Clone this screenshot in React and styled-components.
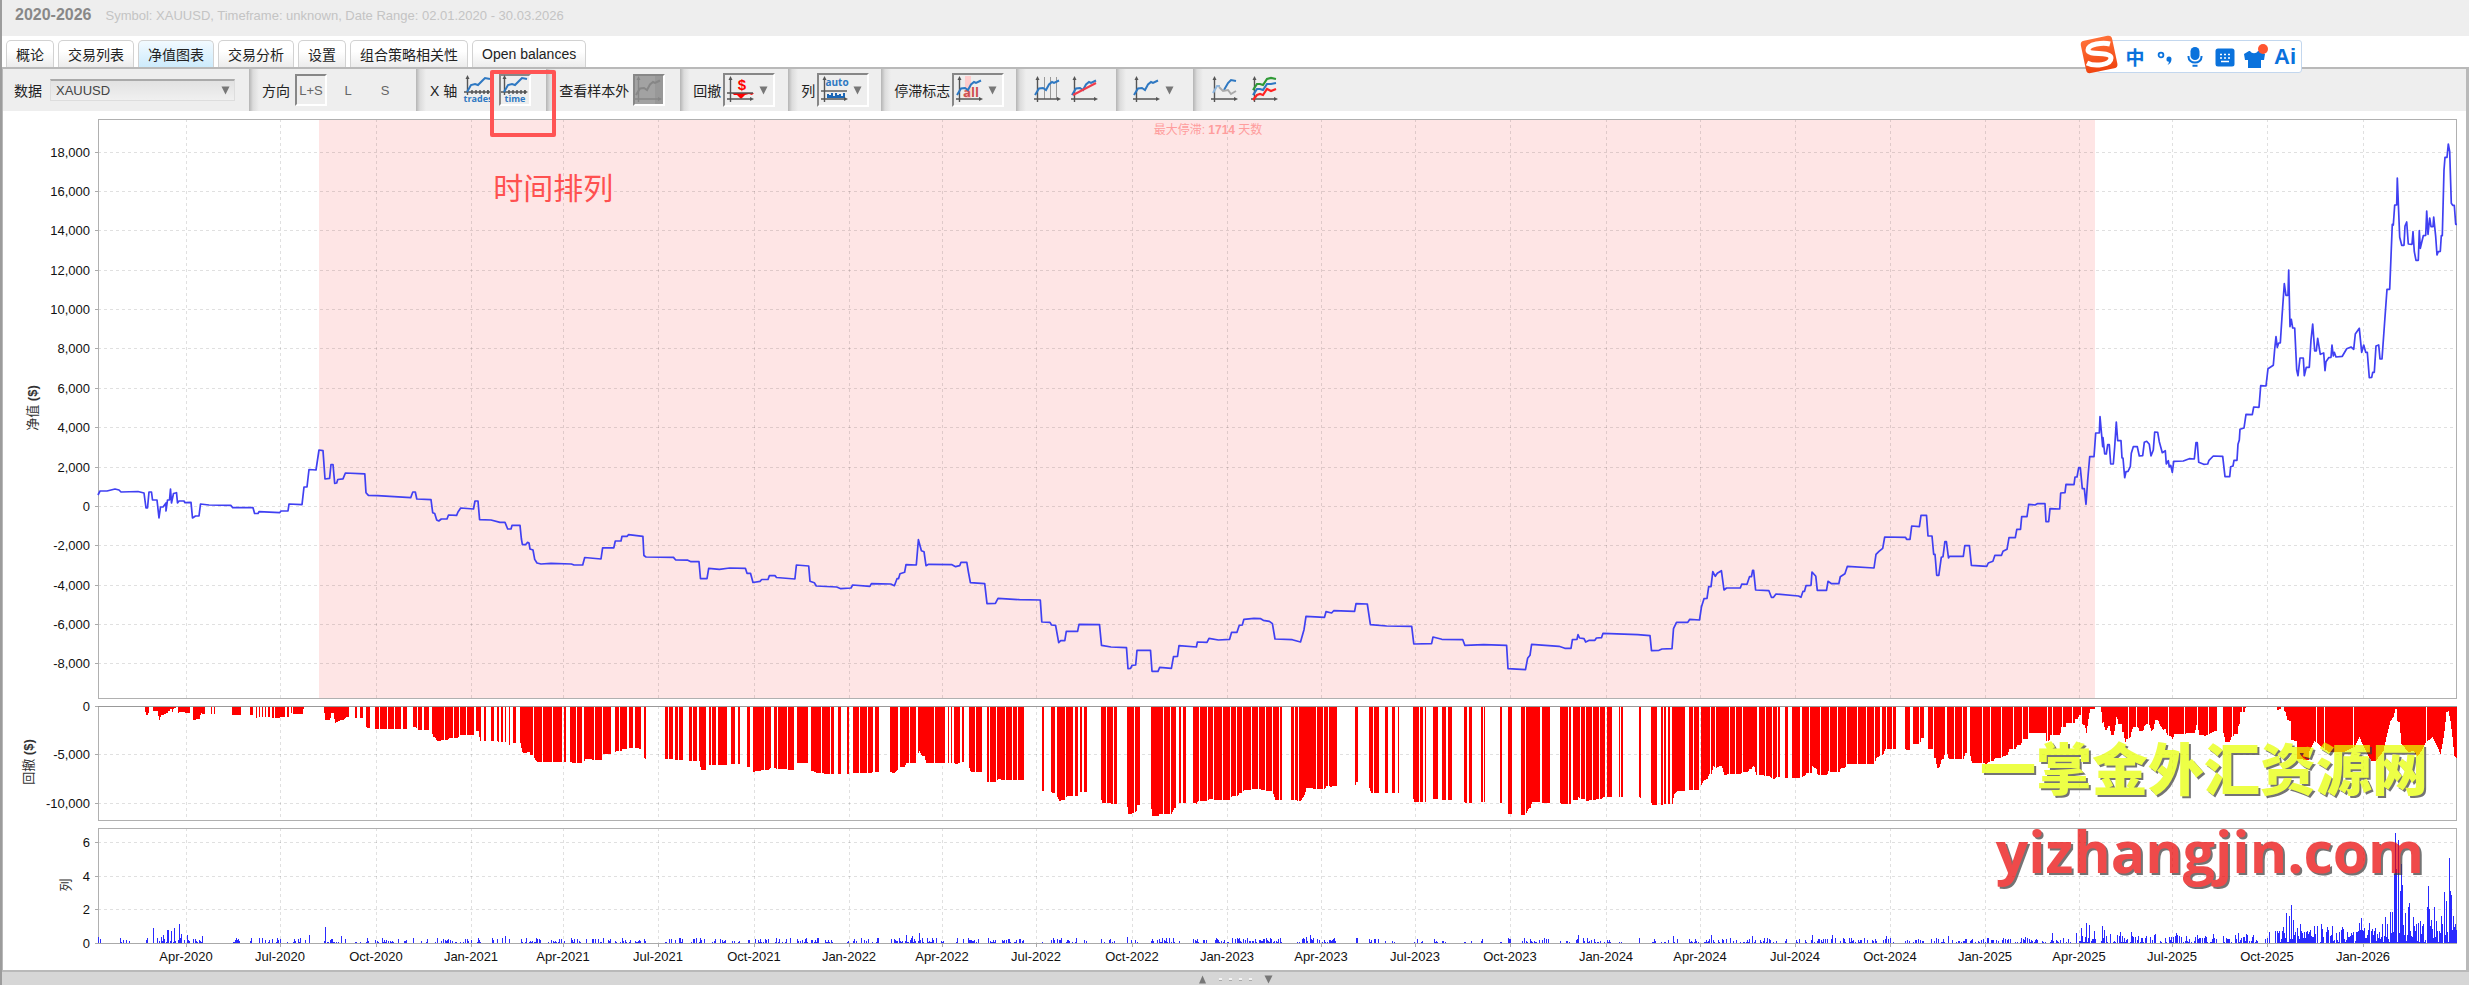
import React from 'react';
import styled, { createGlobalStyle } from 'styled-components';

const GlobalStyle = createGlobalStyle`
  * {
    box-sizing: border-box;
  }

  body {
    margin: 0;
    background: #fff;
    color: #222;
    font-family: "Liberation Sans", "Noto Sans CJK SC", sans-serif;
    font-size: 14px;
  }

  button, select {
    font-family: inherit;
  }
`;

/* ---------- chart data ---------- */

const MONTHS = [
  ['Apr-2020', 187], ['Jul-2020', 281], ['Oct-2020', 377], ['Jan-2021', 472],
  ['Apr-2021', 564], ['Jul-2021', 659], ['Oct-2021', 755], ['Jan-2022', 850],
  ['Apr-2022', 943], ['Jul-2022', 1037], ['Oct-2022', 1133], ['Jan-2023', 1228],
  ['Apr-2023', 1322], ['Jul-2023', 1416], ['Oct-2023', 1511], ['Jan-2024', 1607],
  ['Apr-2024', 1701], ['Jul-2024', 1796], ['Oct-2024', 1891], ['Jan-2025', 1986],
  ['Apr-2025', 2080], ['Jul-2025', 2173], ['Oct-2025', 2268], ['Jan-2026', 2364],
];

const EQUITY = `
98,495 100,491 107,491 115,489 119,490 121,492 138,491.5 144,493 146,508 147.5,508 149,492 151.5,492
152.5,500 157,500 159,518 160.5,507 163,507 166,503 166,511 167.5,500 169.5,500 170.5,489 171.5,503
173.5,493.5 176.5,492.7 177.5,503 179,501 184,501 185,502.7 191,502.3 192.5,518 195.5,516 199,516
200.5,504 209,505 231,505.4 232.7,507.7 253,507.7 254.6,513.5 258,513.5 259,511.6 279.6,512.7
281,511 288,511 289,504 302,504.6 304,487 307,487 309,469.5 316,470 319,450 323,450.6 325,479
329.6,478.4 331,464.5 333,464.5 334.7,483.4 336.7,483 337.8,479.5 343,478.8 345.4,473 364.8,473.8
366,492.7 368.4,495.4 377.5,495.7 410.7,497.7 412.8,492 415.3,492 416.8,499 431,499.6 432.7,512.7
434.7,513.5 436.7,520 438.8,521 441.3,519 447,519 448.5,515 456.6,515.4 458,512 460.7,508 473.5,509
475,501 478,501 479.6,519.7 491,520 500,522.4 505,522.4 507.7,529 511,529 512,525.4 520,525.4
521.4,539 522.4,544.7 525.5,544.7 527.6,542.4 529,543 530,549 533,550 534.7,559.4 537,563 541,564
551,563.3 571.4,564 574,565 582.7,565 584.7,557.5 601,559 602.6,547.8 613.8,547.8 615.3,541 621,541
622,536.3 627,536.3 628.6,534.7 642.9,536.3 643.9,555.5 646,557 673.5,557.4 675.5,559.8 687.8,560.2
691,561.7 699,561.7 700.5,578.7 707,578.7 708.7,568.3 719.4,569.4 729.6,568 745.4,568.3 747,573.3
750.5,573.3 753,582.5 760,581.4 761.7,579.5 768,579.5 769.4,575.6 775,575.6 776.5,577.5 794.9,579
796.4,565 808.7,566 810,581.3 814.3,582.7 816.3,586 836.7,587 840.8,588.7 851,588 852.6,585 869.9,586.3
871.4,583.7 890.8,584 894.4,585.7 897,578.7 898.5,578.7 900,573.7 904.6,572.3 906,564.7 916.3,565
918.4,539.7 921.4,550.7 924,551.7 926,565.7 928.6,564.3 952,564.7 955.6,566.7 959.7,565.7 961,562.3
966.8,562.3 968.4,572 970.4,582.7 984.7,583.7 987,603.7 995.4,603.3 998,598.3 1019.4,599.7 1040.3,600
1041.8,622 1050,622.3 1051.5,625 1055.6,625.3 1058.7,642.7 1060.7,640.7 1064.8,640.7 1066.3,631.3
1077.6,631.3 1079,624.3 1099.5,624.7 1101.5,645.3 1111,647 1126.5,647.7 1128,668.7 1130.6,668.3
1132,665.3 1135.7,665 1137,650.3 1150.5,650.3 1152,671.3 1158,671.3 1159.7,667.3 1171.4,668.3
1173.5,656.7 1177.5,656.3 1179,645.7 1196.4,647 1197.4,642 1207,642.3 1209,638.3 1218.4,640
1229.6,639.3 1231.6,632.3 1237,632.3 1239.3,625.3 1242.3,625 1243.9,619.3 1254,618.3 1260.7,618.7
1263.3,620.3 1269.4,621.3 1272.4,623.7 1275,639 1292.3,639.7 1300.5,642 1304,629.7 1306,616.3
1324.5,617.3 1326,611.7 1331.6,613 1333.7,610.7 1354.6,611.3 1356,603.7 1367.3,604 1370.4,624.7
1386.7,626 1411.7,626.3 1413.8,644 1431.6,643.7 1433,637 1441.8,639.3 1462.8,639.7 1464.8,645.3
1483.7,644.7 1506.6,645.3 1508,668.7 1525.5,669.7 1527.6,658.3 1530,655.3 1531.6,644.3 1559,646.3
1564.8,648.3 1571,648.3 1572.4,639.7 1577,639.3 1578,634.7 1579.6,638 1584,638.7 1585.7,642
1589.3,640.3 1594.9,640.3 1596.4,638 1601.5,637.7 1603,633.3 1637.8,634.7 1650,635.7 1651.5,650.7
1659,650.3 1662,649 1672,648.7 1673.5,628.7 1676.5,622.3 1687.8,622.3 1689.8,619.3 1699.5,620
1701.5,606.7 1704,598.7 1707,598.3 1708.7,586.7 1711,586.7 1712.8,571.7 1715.3,576.3 1717.3,573.3
1721.4,570.7 1724,590 1726.5,588 1740.3,588 1741.8,584 1747,584.3 1749.5,576.7 1751.5,576.7
1752.6,570.3 1753.6,570.3 1755.6,590 1768.9,590.7 1771.4,597.3 1773.5,597.3 1776,594 1798.5,596
1801,597.3 1803,591.3 1804.5,591.3 1806,585.7 1811,585.3 1812,572 1815.8,576.3 1817.3,590.3
1826.5,590.3 1828,581.3 1831.6,583.7 1838.8,583.7 1840.3,576.7 1844.9,573.7 1847.4,566.3 1874,568
1876,554.3 1879,551.3 1882.7,548.3 1884.7,537 1905.6,537.3 1906.6,539.3 1910,539.3 1911.7,526
1919.4,526.7 1921,515.3 1926.5,515.3 1928,536 1932,536 1933.7,554.3 1935,554.3 1936.7,575.3
1938.8,575.3 1941.3,557.3 1943,556.7 1944.9,541.7 1946.4,541.7 1948.5,558 1949.5,556.3 1963.3,556.3
1964.8,545.7 1969.4,545.7 1971.4,565.3 1986.7,566.3 1988.3,563 1992.9,561.3 1994.9,555.3 2001.5,555.3
2003,551.3 2007,549.3 2009,537.7 2015.3,537.7 2016.8,529.3 2020.5,529.3 2021.7,516.7 2027,516.7
2028.7,504.3 2035,505 2037.3,503.7 2045,503.7 2046,521.7 2048.7,521.7 2050,508.7 2059.7,509
2060.7,493 2065,492.7 2066,484.3 2074,484.7 2075,477 2077,477 2078.7,467.7 2080.3,467.7 2082.3,488.7
2084.3,488.7 2086,504.3 2087.7,480 2089.7,456.7 2094,456.7 2095.7,433 2099.3,433 2100,416.7
2102.7,446.7 2103,437.7 2104.7,454 2106.3,454 2107.7,444.7 2109.3,444.7 2110.7,464 2113.3,464
2114.7,446.7 2116.3,422 2117.7,440.7 2121,440.7 2122,458 2123,458 2124.7,477.7 2126,471.7 2128,471.3
2130.3,466.7 2131.3,453.3 2133.3,446.7 2137.3,446.7 2139.3,456 2142.7,455.7 2144.3,442.3 2146.7,441.3
2149.3,444.3 2151,456 2153.3,450 2154.7,432 2157.7,432.3 2159.3,441.7 2162.3,452.7 2165.3,450.7
2166.3,464 2168.3,460.7 2169.3,467 2170.7,465.3 2172.3,472.3 2173.7,461.3 2183.3,461 2189.3,458.7
2194.3,459 2196,442.7 2197.3,442.7 2198.7,462.3 2203.7,464.3 2207.7,464 2209,460.3 2213.3,456
2222.7,456.3 2225,476.7 2229.7,476.7 2230.7,466.7 2233,466 2234,460.3 2237,460.3 2238,444.3
2239.3,440 2240,429.3 2244,428 2246,414.3 2252.3,414.7 2253.7,407 2259,407.3 2260.7,385.7 2266,386
2268,368.7 2273.3,365.3 2274.7,349 2276,336.7 2277.3,347.3 2278.7,343 2280.3,343 2282,316.7
2284.3,283.7 2286,295.3 2288,295.3 2288.7,270 2290,326.7 2291.3,319.3 2292.7,328 2294.7,328
2296.7,370 2298,375.7 2300,358 2303.3,358 2304.3,375.7 2306.3,367.3 2309.3,367.3 2311,340 2312.7,324
2314.7,351 2316.3,351 2317.7,338.3 2320.3,354.3 2323.7,353 2325,370.7 2326,361.7 2328.7,357.7
2331,357.3 2332,345 2333.3,356 2334.3,352.3 2336,357 2342.3,356.3 2346.7,348.7 2351,347 2353.7,349.3
2355.3,334 2359.3,328.3 2361.7,352.3 2363.7,345 2365.7,352.3 2367.3,352.3 2369.3,377.7 2371.7,377.3
2372.7,372.3 2374.3,372.3 2376,346 2378.7,345 2380,359 2382,359 2384.3,326.7 2387,289.3 2389.7,289.3
2391,256.7 2392.3,224.3 2393.3,225 2394.7,205 2396.7,205 2397.3,178 2399.7,237.3 2401.7,245.3
2404,245.3 2405,226 2406.7,222 2408.3,244 2412,244.3 2413,231.7 2414.3,251.7 2416,260.3 2418.3,260.3
2419.3,230.7 2420.3,248.3 2423.3,235.7 2425.7,235.3 2426.7,211 2428,234.3 2429.7,218 2431,226.7
2433,226.7 2433.7,217 2435.7,236.7 2437,255 2438.3,251.7 2440.3,251.3 2441.3,235.7 2442.3,235.7
2444,170 2445,157.3 2447,157.3 2448.3,144 2449.7,151.7 2451.3,203.3 2452.7,205.3 2454.3,205.3
2455.7,224.3 2457,224.3`;

// days with open drawdown, as start-end ranges on the x axis
const DRAWDOWN_RANGES = `
120-131 145-149 153-176 178-190 193-205 211-212 214-215 232-241 250-253 256-257 259-260 262-263 265-266
268-270 272-274 275-285 287-289 291-292 293-306 324-349 355-357 360-363 366-370 375-379 380-387 388-394
395-401 403-407 413-417 418-422 424-429 432-444 445-453 454-459 460-466 467-474 476-481 484-486
491-494 497-499 501-503 505-506 509-510 513-516 520-533 534-542 543-552 553-562 564-566 570-576
577-582 584-594 595-602 603-611 615-619 620-627 629-633 635-641 644-646 665-668 669-673 675-678
679-683 689-692 693-697 699-706 709-711 712-716 718-727 731-735 738-740 747-750 753-764 765-771
774-777 778-787 788-794 797-808 811-821 822-830 831-834 838-841 847-849 853-859 860-867 868-873
875-879 890-898 900-909 910-916 918-934 935-945 948-949 951-952 954-960 962-964 969-975 976-982
987-989 990-996 997-1005 1006-1012 1013-1017 1018-1024 1042-1044 1051-1055 1057-1065 1066-1073
1075-1078 1080-1082 1084-1087 1101-1106 1107-1113 1114-1117 1127-1134 1135-1140 1151-1163 1164-1170
1171-1176 1179-1181 1183-1186 1193-1199 1200-1207 1208-1213 1214-1222 1223-1230 1231-1236 1237-1242
1243-1251 1252-1258 1259-1265 1266-1272 1273-1279 1280-1282 1291-1294 1295-1298 1299-1316 1317-1323
1324-1328 1329-1337 1355-1358 1369-1373 1374-1379 1385-1388 1392-1395 1398-1399 1413-1419 1420-1423
1425-1426 1433-1438 1442-1446 1448-1452 1464-1467 1469-1472 1481-1483 1484-1485 1500-1502 1508-1512
1521-1525 1526-1540 1542-1550 1560-1568 1569-1571 1573-1580 1581-1585 1586-1592 1593-1599 1600-1605
1607-1612 1619-1620 1621-1623 1639-1641 1651-1657 1661-1663 1664-1666 1668-1670 1672-1685 1689-1693
1694-1699 1701-1710 1711-1715 1716-1729 1730-1735 1736-1742 1743-1757 1759-1765 1766-1772 1773-1777
1778-1780 1785-1788 1792-1800 1802-1809 1810-1820 1821-1829 1830-1837 1838-1846 1847-1857 1858-1866
1867-1874 1875-1880 1882-1886 1887-1892 1893-1896 1905-1910 1913-1919 1920-1924 1928-1933 1934-1945
1947-1954 1955-1962 1963-1967 1970-1982 1983-1990 1991-2001 2002-2013 2014-2022 2023-2028 2029-2047
2048-2052 2053-2062 2063-2072 2073-2081 2082-2096 2101-2128 2129-2136 2137-2148 2149-2168 2169-2184
2185-2197 2198-2208 2209-2217 2223-2232 2233-2242 2243-2259 2265-2268 2277-2316 2317-2324 2325-2353
2354-2426 2427-2457`;

const DRAWDOWN_TAIL = `
2283,3 2285,6 2287,14 2290,15 2291,34 2296,35 2297,53 2308,54 2309,45 2314,35 2319,39 2328,46 2343,46
2354,41 2359,31 2363,40 2368,50 2371,55 2375,55 2383,45 2386,31 2390,15 2393,11 2395,3 2396,3 2397,15
2399,16 2401,38 2408,46 2413,45 2417,50 2421,45 2426,35 2430,33 2432,31 2437,41 2440,48 2442,38
2444,25 2446,6 2448,5 2450,15 2452,31 2454,50 2457,53`;

const VOLUME_PEAKS = `
98,6 100,4 123,3 153,15 161,6 163,8 167,13 168,13 171,12 174,15 179,19 181,9 187,8 202,7 236,5 309,8
325,16 341,7 367,5 413,5 478,5 505,7 536,5 603,5 700,5 817,5 899,5 906,8 912,7 919,10 968,5 1127,6
1306,6 1310,8 1356,5 1578,8 1673,7 1711,8 1752,7 1812,8 1832,8 1886,7 1948,7 2025,6 2052,10 2076,10
2081,15 2086,20 2089,18 2094,12 2102,17 2104,13 2110,9 2120,11 2131,11 2155,9 2176,10 2197,8 2213,9
2238,10 2246,9 2269,11 2275,12 2277,12 2279,12 2283,16 2286,30 2289,27 2291,38 2293,23 2297,15 2300,19
2306,11 2314,17 2317,17 2321,19 2327,16 2332,17 2342,16 2347,11 2353,11 2359,20 2361,25 2364,15 2369,20
2375,15 2385,26 2387,19 2390,31 2392,31 2394,69 2395,110 2396,74 2398,103 2400,52 2401,79 2402,58
2405,30 2408,36 2409,40 2413,26 2416,17 2420,22 2427,36 2428,57 2429,34 2431,23 2434,36 2436,22 2441,27
2444,51 2446,42 2449,85 2450,52 2451,48 2453,27`;

const toPoints = (text) => text.trim().split(/\s+/).map((pair) => pair.split(',').map(Number));

const valueAt = (points, x) => {
  const i = points.findIndex((p) => p[0] >= x);
  if (i < 0) return points[points.length - 1][1];
  if (i === 0) return points[0][1];
  const [x0, y0] = points[i - 1];
  const [x1, y1] = points[i];
  return x1 === x0 ? y1 : y0 + ((y1 - y0) * (x - x0)) / (x1 - x0);
};

const equityPoints = toPoints(EQUITY);
const tailPoints = toPoints(DRAWDOWN_TAIL);
const ranges = DRAWDOWN_RANGES.trim().split(/\s+/).map((r) => r.split('-').map(Number));

const drawdownAt = (x) => {
  if (x > 2283) return valueAt(tailPoints, x);
  const past = equityPoints.filter((p) => p[0] <= x).map((p) => p[1]);
  const height = (valueAt(equityPoints, x) - Math.min(...past)) * 0.495;
  return x > 2101 && x < 2240 ? height + 6 : height;
};

const buildDrawdown = () => {
  let path = '';
  ranges.forEach(([from, to]) => {
    for (let x = from; x < to; x += 1) {
      path += `M${x + 0.5} 706v${Math.max(1, Math.round(drawdownAt(x)))}`;
    }
  });
  return path;
};

const buildVolume = () => {
  let path = '';
  let seed = 7;
  const random = () => {
    seed = (seed * 16807) % 2147483647;
    return seed / 2147483647;
  };
  const size = (x) => {
    if (x > 2380) return 20;
    if (x > 2268) return 14;
    if (x > 2072) return 8;
    return 5;
  };
  ranges.forEach(([from, to]) => {
    for (let x = from; x < to; x += 1) {
      if (random() < (x > 2268 ? 0.9 : 0.6)) {
        path += `M${x + 0.5} 943v-${Math.max(1, Math.round(random() * size(x)))}`;
      }
    }
  });
  toPoints(VOLUME_PEAKS).forEach(([x, height]) => {
    path += `M${x + 0.5} 943v-${height}`;
  });
  return path;
};

const drawdownPath = buildDrawdown();
const volumePath = buildVolume();

const PANELS = [
  {
    top: 119,
    bottom: 698,
    ticks: [
      ['18,000', 152], ['16,000', 191], ['14,000', 230], ['12,000', 270], ['10,000', 309],
      ['8,000', 348], ['6,000', 388], ['4,000', 427], ['2,000', 467], ['0', 506],
      ['-2,000', 545], ['-4,000', 585], ['-6,000', 624], ['-8,000', 663],
    ],
  },
  { top: 706, bottom: 820, ticks: [['0', 706], ['-5,000', 754], ['-10,000', 803]] },
  { top: 828, bottom: 943, ticks: [['6', 842], ['4', 876], ['2', 909], ['0', 943]] },
];

/* ---------- layout ---------- */

const Page = styled.div`
  display: flex;
  flex-direction: column;
  position: relative;
  border-left: 2px solid #9c9c9c;
`;

const Header = styled.header`
  display: flex;
  align-items: center;
  gap: 14px;
  height: 36px;
  padding: 0 13px 6px;
  background: #eee;
`;

const Title = styled.h1`
  margin: 0;
  font-size: 16px;
  color: #888;
`;

const Subtitle = styled.span`
  font-size: 13px;
  color: #c4c4c4;
`;

const TabBar = styled.nav`
  display: flex;
  align-items: flex-end;
  gap: 4px;
  height: 31px;
  padding-left: 4px;
`;

const Tab = styled.button`
  height: 27px;
  padding: 0 9px;
  border: 1px solid #d2d2d2;
  border-bottom: 0;
  border-radius: 5px 5px 0 0;
  background: ${(p) => (p.$active
    ? 'linear-gradient(#f2faff, #cdebfc)'
    : 'linear-gradient(#fff 40%, #ececec)')};
  color: #222;
  font-size: 14px;
  white-space: nowrap;
`;

const Panel = styled.main`
  border: solid #b9b9b9;
  border-width: 2px 3px 2px 1px;
`;

const Toolbar = styled.div`
  display: flex;
  height: 42px;
  background: #eee;
`;

const Group = styled.div`
  display: flex;
  align-items: center;
  gap: ${(p) => p.$gap || 5}px;
  padding: 0 ${(p) => p.$end || 15}px 0 ${(p) => p.$start || 13}px;
  background: ${(p) => (p.$first ? 'none' : 'linear-gradient(90deg, #b4b4b4, #dcdcdc 4px, #eee 10px)')};
`;

const Label = styled.label`
  color: #222;
  font-size: 14px;
  white-space: nowrap;
`;

const SelectBox = styled.div`
  display: flex;
  align-items: center;
  position: relative;
  margin-left: 3px;

  svg {
    position: absolute;
    right: 5px;
    pointer-events: none;
  }
`;

const Select = styled.select`
  width: 185px;
  height: 22px;
  padding: 0 5px;
  border: 1px solid #ddd;
  border-top: 2px solid #aaa;
  appearance: none;
  background: linear-gradient(#e2e2e2, #f0f0f0);
  color: #444;
  font-size: 13px;
`;

const ToolButton = styled.button`
  display: flex;
  align-items: center;
  justify-content: ${(p) => (p.$wide ? 'space-between' : 'center')};
  width: ${(p) => (p.$wide ? 52 : 32)}px;
  height: ${(p) => (p.$wide ? 34 : 32)}px;
  padding: ${(p) => (p.$wide ? '0 5px 0 2px' : '0')};
  border: 2px solid;
  border-color: ${(p) => (p.$pressed ? '#878787 #fff #fff #878787' : 'transparent')};
  background: ${(p) => (p.$dark ? '#a2a2a2' : 'transparent')};
  color: #666;
  font-size: 13px;
`;

const Marked = styled.div`
  position: relative;
`;

const MarkFrame = styled.div`
  position: absolute;
  top: -4px;
  left: -9px;
  width: 66px;
  height: 67px;
  border: 4px solid #ff5454;
  border-radius: 2px;
  pointer-events: none;
`;

const MarkText = styled.p`
  position: absolute;
  top: 95px;
  left: -6px;
  margin: 0;
  color: #ff5050;
  font-size: 30px;
  line-height: 40px;
  white-space: nowrap;
`;

const Chart = styled.svg`
  display: block;
  width: 100%;
  height: auto;
  font-size: 13px;
`;

const Splitter = styled.footer`
  display: flex;
  align-items: center;
  justify-content: center;
  gap: 12px;
  height: 14px;
  background: #d6d6d6;
`;

const Dots = styled.div`
  display: flex;
  gap: 7px;

  i {
    width: 3px;
    height: 3px;
    background: #f4f4f4;
    border-bottom: 1px solid #aaa;
  }
`;

const InputBar = styled.div`
  display: flex;
  align-items: center;
  position: absolute;
  top: 40px;
  right: 167px;
  height: 33px;
  padding: 0 1px 0 22px;
  border: 1px solid #c3d7ee;
  border-radius: 3px;
  background: #fff;
`;

const InputLogo = styled.svg`
  position: absolute;
  top: -7px;
  left: -19px;
`;

const InputButton = styled.button`
  display: flex;
  align-items: center;
  justify-content: center;
  width: 30px;
  height: 30px;
  padding: 0;
  border: 0;
  background: none;
  color: #0a72dc;
  font-size: ${(p) => p.$size || 19}px;
  font-weight: 700;
`;

const Watermark = styled.div`
  display: flex;
  flex-direction: column;
  align-items: flex-end;
  position: absolute;
  right: 41px;
  bottom: 96px;
  opacity: 0.72;
  white-space: nowrap;
  pointer-events: none;
`;

const WatermarkName = styled.span`
  color: #e7ff00;
  font-size: 56px;
  font-weight: 900;
  line-height: 82px;
  text-shadow: 2px 2px #3f3f3f;
`;

const WatermarkSite = styled.span`
  padding-right: 4px;
  color: #ea0505;
  font-family: "Open Sans", sans-serif;
  font-size: 57px;
  font-weight: 700;
  line-height: 78px;
  text-shadow: 2px 2px #3f3f3f;
`;

/* ---------- icons ---------- */

const Arrow = ({ up }) => (
  <svg width="9" height="9" viewBox="0 0 9 9" aria-hidden="true">
    <path d={up ? 'M4.5 0.5 8 8.5H1Z' : 'M0.5 0.5h8L4.5 8.5Z'} fill="#777" />
  </svg>
);

const LINE = 'M1 19 5 12.5 9 12 12 14 15 8.5 18 6 20 7 25 4.5';

const Axes = ({ base = 23, color = '#555' }) => (
  <g stroke={color} fill={color}>
    <path d={`M3.5 3V${base + 3}M0 ${base}H24`} strokeWidth="1.4" fill="none" />
    <path d={`M3.5 0 5.5 4h-4ZM27 ${base}l-4-2v4Z`} stroke="none" />
  </g>
);

const IconBase = ({ children }) => (
  <svg width="28" height="28" viewBox="0 0 28 28" aria-hidden="true" fill="none">
    {children}
  </svg>
);

const ScaleDrawing = styled.svg`
  flex: none;
  width: 34px;
  height: 32px;
`;

const ScaleIcon = ({ text }) => (
  <ScaleDrawing viewBox="-3 -1 34 32" aria-hidden="true" fill="none">
    <Axes base={17} />
    <path d="M8 15v4M12 15v4M16 15v4M20 15v4M24 15v4" stroke="#555" strokeWidth="1.5" />
    <path d="M3 17 7 10 11 9 14 10 18 6 21 3 26 4" stroke="#2e78c2" strokeWidth="2" />
    <text x="14" y="27" textAnchor="middle" fill="#2e78c2" fontSize="9" fontWeight="700" fontFamily="Open Sans, sans-serif">
      {text}
    </text>
  </ScaleDrawing>
);

const SampleIcon = () => (
  <IconBase>
    <path d="M20 0h8v28h-8Z" fill="#989898" />
    <Axes color="#868686" />
    <path d={LINE} stroke="#868686" strokeWidth="2" />
  </IconBase>
);

const DrawdownIcon = () => (
  <IconBase>
    <path d="M5 17h22l-2 2-3-1-4 1-4 4-4-4-3 0-2-2Z" fill="#f00" />
    <Axes />
    <path d="M0 17h26" stroke="#555" strokeWidth="1.5" />
    <text x="15" y="14" textAnchor="middle" fill="#f00" fontSize="15" fontWeight="700">$</text>
  </IconBase>
);

const BarsIcon = () => (
  <IconBase>
    <path d="M6 22v-4h2v1h2v-2h2v3h2v-3h2v2h2v-1h2v2h2v-3h2v5Z" fill="#1c66b4" />
    <Axes />
    <path d="M0 15h26" stroke="#555" strokeWidth="1.4" />
    <text x="16" y="10" textAnchor="middle" fill="#2e78c2" fontSize="10" fontWeight="700" fontFamily="Open Sans, sans-serif">
      auto
    </text>
  </IconBase>
);

const StagnationIcon = () => (
  <IconBase>
    <path d="M9 0h6v22H9Z" fill="#fcc" />
    <Axes />
    <text x="15" y="21" textAnchor="middle" fill="#cf5050" fontSize="13" fontWeight="700" fontFamily="Open Sans, sans-serif">
      all
    </text>
    <path d={LINE} stroke="#2e78c2" strokeWidth="2" />
  </IconBase>
);

const GridIcon = () => (
  <IconBase>
    <path d="M10.5 1v22M16.5 1v22M22.5 1v22" stroke="#999" />
    <Axes />
    <path d={LINE} stroke="#2e78c2" strokeWidth="2" />
  </IconBase>
);

const TrendIcon = () => (
  <IconBase>
    <Axes />
    <path d={LINE} stroke="#2e78c2" strokeWidth="2" />
    <path d="M2 19 25 7" stroke="#f03c4b" strokeWidth="2" />
  </IconBase>
);

const LineIcon = () => (
  <IconBase>
    <Axes />
    <path d={LINE} stroke="#2e78c2" strokeWidth="2" />
  </IconBase>
);

const CompareIcon = () => (
  <IconBase>
    <Axes />
    <path d="M2 17 6 10 9 10" stroke="#8fb6dd" strokeWidth="2" />
    <path d="M13 14 17 7 20 4 25 5" stroke="#2e78c2" strokeWidth="2" />
    <path d="M8 11 12 15 17 14 20 18 25 15" stroke="#aaa" strokeWidth="2" />
  </IconBase>
);

const StackIcon = () => (
  <IconBase>
    <Axes />
    <path d="M2 14 6 8 9 8 12 9 16 3 20 2 25 3" stroke="#2f9a36" strokeWidth="2.2" />
    <path d="M2 19 6 13 9 13 12 14 16 8 20 8 25 7" stroke="#2e78c2" strokeWidth="2.2" />
    <path d="M2 24 6 19 9 18 12 19 16 13 20 15 25 13" stroke="#f22" strokeWidth="2.2" />
  </IconBase>
);

/* ---------- sections ---------- */

const tabs = ['概论', '交易列表', '净值图表', '交易分析', '设置', '组合策略相关性', 'Open balances'];

const ToolbarRow = () => (
  <Toolbar>
    <Group $first $start={11} $end={14}>
      <Label htmlFor="data">数据</Label>
      <SelectBox>
        <Select id="data" defaultValue="XAUUSD">
          <option>XAUUSD</option>
        </Select>
        <Arrow />
      </SelectBox>
    </Group>
    <Group>
      <Label as="span">方向</Label>
      <ToolButton $pressed>L+S</ToolButton>
      <ToolButton>L</ToolButton>
      <ToolButton>S</ToolButton>
    </Group>
    <Group $start={14}>
      <Label as="span">X 轴</Label>
      <ToolButton aria-label="trades"><ScaleIcon text="trades" /></ToolButton>
      <Marked>
        <ToolButton $pressed aria-label="time"><ScaleIcon text="time" /></ToolButton>
        <MarkFrame />
        <MarkText>时间排列</MarkText>
      </Marked>
    </Group>
    <Group $gap={4}>
      <Label htmlFor="sample">查看样本外</Label>
      <ToolButton id="sample" $pressed $dark><SampleIcon /></ToolButton>
    </Group>
    <Group $gap={2} $end={13}>
      <Label htmlFor="drawdown">回撤</Label>
      <ToolButton id="drawdown" $wide $pressed><DrawdownIcon /><Arrow /></ToolButton>
    </Group>
    <Group $gap={2} $end={12}>
      <Label htmlFor="bars">列</Label>
      <ToolButton id="bars" $wide $pressed><BarsIcon /><Arrow /></ToolButton>
    </Group>
    <Group $gap={2} $end={12}>
      <Label htmlFor="stagnation">停滞标志</Label>
      <ToolButton id="stagnation" $wide $pressed><StagnationIcon /><Arrow /></ToolButton>
    </Group>
    <Group $start={16}>
      <ToolButton aria-label="grid"><GridIcon /></ToolButton>
      <ToolButton aria-label="trend"><TrendIcon /></ToolButton>
    </Group>
    <Group $end={12}>
      <ToolButton $wide aria-label="line"><LineIcon /><Arrow /></ToolButton>
    </Group>
    <Group $start={16} $gap={8}>
      <ToolButton aria-label="compare"><CompareIcon /></ToolButton>
      <ToolButton aria-label="stack"><StackIcon /></ToolButton>
    </Group>
  </Toolbar>
);

const EquityChart = () => (
  <Chart viewBox="3 111 2463 859">
    <rect x="319" y="119" width="1776" height="579" fill="#fee5e5" />
    {PANELS.map((panel) => (
      <g key={panel.top}>
        {panel.ticks.map(([label, y]) => (
          <g key={label}>
            <path d={`M98 ${y + 0.5}H2457`} stroke="#000" strokeOpacity="0.12" strokeDasharray="3 3" />
            <path d={`M95 ${y + 0.5}h3`} stroke="#aaa" />
            <text x="90" y={y + 5} textAnchor="end" fill="#111">{label}</text>
          </g>
        ))}
        {MONTHS.map(([month, x]) => (
          <path
            key={month}
            d={`M${x - 0.5} ${panel.top}V${panel.bottom}`}
            stroke="#000"
            strokeOpacity="0.12"
            strokeDasharray="3 3"
          />
        ))}
        <rect
          x="98.5"
          y={panel.top + 0.5}
          width="2358"
          height={panel.bottom - panel.top}
          fill="none"
          stroke="#b0b0b0"
        />
      </g>
    ))}
    <path d={drawdownPath} stroke="#f00" />
    <path d="M98 706.5H2457" stroke="#999" />
    <path d={volumePath} stroke="#2a2aff" />
    <path d="M98 943.5H2457" stroke="#aaa" />
    <polyline points={EQUITY} fill="none" stroke="#4040f2" strokeWidth="1.7" strokeLinejoin="round" />
    {MONTHS.map(([month, x]) => (
      <g key={month}>
        <path d={`M${x - 0.5} 944v3`} stroke="#aaa" />
        <text x={x - 1} y="961" textAnchor="middle" fill="#111">{month}</text>
      </g>
    ))}
    <text x="1208" y="134" textAnchor="middle" fill="#ff9d9d" fontSize="12">
      最大停滞: <tspan fontWeight="700">1714</tspan> 天数
    </text>
    <g fill="#333" textAnchor="middle">
      <text transform="translate(37 408) rotate(-90)">净值 <tspan fontWeight="700">($)</tspan></text>
      <text transform="translate(33 762) rotate(-90)">回撤 <tspan fontWeight="700">($)</tspan></text>
      <text transform="translate(70 885) rotate(-90)">列</text>
    </g>
  </Chart>
);

const ImeBar = () => (
  <InputBar>
    <InputLogo width="40" height="40" viewBox="0 0 40 40" aria-hidden="true">
      <defs>
        <linearGradient id="logo" x1="0" y1="0" x2="0" y2="1">
          <stop offset="0" stopColor="#ff7038" />
          <stop offset="1" stopColor="#f04410" />
        </linearGradient>
      </defs>
      <rect x="4" y="4" width="32" height="33" rx="4" fill="url(#logo)" transform="rotate(-12 20 20)" />
      <path
        d="M31 10C24 8 9 10 9 16C9 22 32 17 32 24C32 31 16 33 8 29"
        fill="none"
        stroke="#fff"
        strokeWidth="5"
      />
    </InputLogo>
    <InputButton>中</InputButton>
    <InputButton aria-label="punctuation">
      <svg width="16" height="18" viewBox="0 0 16 18">
        <circle cx="4" cy="7" r="2.4" fill="none" stroke="#0a72dc" strokeWidth="1.8" />
        <path d="M9.5 11a2.5 2.5 0 1 1 5 0c0 3-1.5 5-4 6 .8-1 1.5-2 1.400-3.200A2.500 2.500 0 0 1 9.500 11Z" fill="#0a72dc" />
      </svg>
    </InputButton>
    <InputButton aria-label="voice">
      <svg width="16" height="20" viewBox="0 0 16 20">
        <rect x="3.5" y="0" width="9" height="13" rx="4.5" fill="#0a72dc" />
        <path d="M1.5 9v1a6.5 5.5 0 0 0 13 0V9M8 15.5v1M5.5 18.8h5" stroke="#0a72dc" strokeWidth="2" fill="none" />
      </svg>
    </InputButton>
    <InputButton aria-label="keyboard">
      <svg width="20" height="20" viewBox="0 0 20 20">
        <rect x="0.5" y="1.5" width="19" height="18" rx="2.5" fill="#0a72dc" />
        <path d="M5 7.5h2M9 7.5h2M13 7.5h2M5 11h2M9 11h2M13 11h2M6 14.5h8" stroke="#fff" strokeWidth="1.3" />
      </svg>
    </InputButton>
    <InputButton aria-label="skin">
      <svg width="26" height="28" viewBox="0 0 26 28">
        <path d="M8 8c2 3 6 3 8 0h2l5 3-1 6h-3v8H6v-8H3l-1-6 5-3Z" fill="#0a72dc" />
        <circle cx="21" cy="6" r="5" fill="#ff5530" />
      </svg>
    </InputButton>
    <InputButton $size={22}>Ai</InputButton>
  </InputBar>
);

const App = () => {
  return (
    <>
      <GlobalStyle />
      <Page>
        <Header>
          <Title>2020-2026</Title>
          <Subtitle>Symbol: XAUUSD, Timeframe: unknown, Date Range: 02.01.2020 - 30.03.2026</Subtitle>
        </Header>
        <TabBar>
          {tabs.map((tab) => (
            <Tab key={tab} $active={tab === '净值图表'}>{tab}</Tab>
          ))}
        </TabBar>
        <Panel>
          <ToolbarRow />
          <EquityChart />
        </Panel>
        <Splitter>
          <Arrow up />
          <Dots><i /><i /><i /><i /></Dots>
          <Arrow />
        </Splitter>
        <ImeBar />
        <Watermark>
          <WatermarkName>一掌金外汇资源网</WatermarkName>
          <WatermarkSite>yizhangjin.com</WatermarkSite>
        </Watermark>
      </Page>
    </>
  );
};

export default App;
